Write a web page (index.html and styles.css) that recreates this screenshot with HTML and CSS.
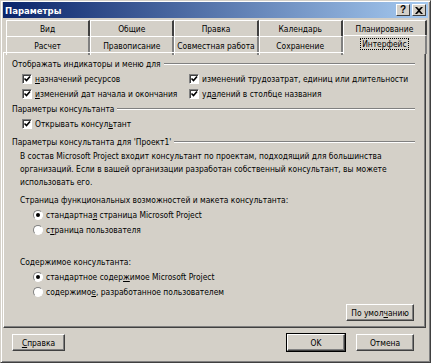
FILE: index.html
```html
<!DOCTYPE html>
<html lang="ru">
<head>
    <meta charset="UTF-8">
    <title>Параметры</title>
    <link rel="stylesheet" href="styles.css">
</head>
<body>
    <div class="dialog">
        <div class="titlebar">
            <span class="title">Параметры</span>
            <div class="caption-buttons">
                <span class="cbtn">?</span>
                <span class="cbtn">
                    <svg width="8" height="7" viewBox="0 0 8 7"><path d="M0 0h2l2 2 2-2h2L5 3.5 8 7H6L4 5 2 7H0l3-3.5z" fill="#000"/></svg>
                </span>
            </div>
        </div>

        <div class="tabs">
            <div class="tab-row back">
                <div class="tab">Вид</div>
                <div class="tab">Общие</div>
                <div class="tab">Правка</div>
                <div class="tab">Календарь</div>
                <div class="tab">Планирование</div>
            </div>
            <div class="tab-row front">
                <div class="tab">Расчет</div>
                <div class="tab">Правописание</div>
                <div class="tab">Совместная работа</div>
                <div class="tab">Сохранение</div>
                <div class="tab active"><span class="focus">Интерфейс</span></div>
            </div>
        </div>

        <div class="panel">
            <div class="group-title"><span>Отображать индикаторы и меню для</span><i class="rule"></i></div>
            <div class="check-grid">
                <label class="check"><span class="box checked"></span><span><u>н</u>азначений ресурсов</span></label>
                <label class="check"><span class="box checked"></span><span>изменений трудозатрат, единиц или длительности</span></label>
                <label class="check"><span class="box checked"></span><span><u>и</u>зменений дат начала и окончания</span></label>
                <label class="check"><span class="box checked"></span><span>уд<u>а</u>лений в столбце названия</span></label>
            </div>

            <div class="group-title"><span>Параметры консультанта</span><i class="rule"></i></div>
            <label class="check indent"><span class="box checked"></span><span>Открывать консул<u>ь</u>тант</span></label>

            <div class="group-title gap"><span>Параметры консультанта для 'Проект1'</span><i class="rule"></i></div>
            <p class="text">В состав Microsoft Project входит консультант по проектам, подходящий для большинства<br>организаций. Если в вашей организации разработан собственный консультант, вы можете<br>использовать его.</p>

            <div class="sub">Страница функциональных возможностей и макета консультанта:</div>
            <label class="radio"><span class="dot on"></span><span>стандартна<u>я</u> страница Microsoft Project</span></label>
            <label class="radio"><span class="dot"></span><span>с<u>т</u>раница пользователя</span></label>

            <div class="sub spaced">Содержимое консультанта:</div>
            <label class="radio"><span class="dot on"></span><span>стандартное содер<u>ж</u>имое Microsoft Project</span></label>
            <label class="radio"><span class="dot"></span><span>содержимо<u>е</u>, разработанное пользователем</span></label>

            <div class="panel-actions">
                <button class="btn reset">По умол<u>ч</u>анию</button>
            </div>
        </div>

        <div class="footer">
            <button class="btn help"><u>С</u>правка</button>
            <span class="spacer"></span>
            <button class="btn wide default">OK</button>
            <button class="btn wide">Отмена</button>
        </div>
    </div>
</body>
</html>
```

FILE: styles.css
```css
body {
    margin: 0;
    background-color: #d4d0c8;
    font-family: "DejaVu Sans Condensed", "Liberation Sans", sans-serif;
    font-size: 8.4px;
    color: #000;
}

.dialog {
    width: 431px;
    height: 363px;
    box-sizing: border-box;
    border: 1px solid;
    border-color: #d4d0c8 #404040 #404040 #d4d0c8;
    box-shadow: inset 1px 1px #fff, inset -1px -1px #808080;
    padding: 1px 2px 2px 2px;
    display: flex;
    flex-direction: column;
}

.titlebar {
    height: 16px;
    display: flex;
    align-items: center;
    padding: 0 2px 0 2px;
    background: linear-gradient(to right, #0a246a, #a6caf0);
}

.title {
    color: #fff;
    font-weight: bold;
    font-size: 9.5px;
    flex: 1;
}

.caption-buttons {
    display: flex;
    gap: 2px;
}

.cbtn {
    width: 14px;
    height: 12px;
    box-sizing: border-box;
    background-color: #d4d0c8;
    border: 1px solid;
    border-color: #fff #404040 #404040 #fff;
    display: flex;
    align-items: center;
    justify-content: center;
    font-family: "Liberation Sans", sans-serif;
    font-weight: bold;
    font-size: 10px;
    line-height: 1;
}

/* tabs */
.tabs {
    margin: 2px 0 0 3px;
    width: 421px;
}

.tab-row {
    display: grid;
    grid-template-columns: repeat(5, 1fr);
    height: 16px;
}

.tab {
    display: flex;
    align-items: center;
    justify-content: center;
    border-top: 1px solid #fff;
    border-left: 1px solid #fff;
    border-right: 2px solid #404040;
    box-sizing: border-box;
    white-space: nowrap;
    background-color: #d4d0c8;
}

.tab-row.front .tab {
    border-right-color: #808080;
}

.tab.active {
    position: relative;
    z-index: 1;
    top: -1px;
    height: 19px;
    padding-bottom: 2px;
    border-right-color: #404040;
}

.focus {
    outline: 1px dotted #000;
    padding: 0 1px;
}

/* page */
.panel {
    margin: 0 2px 0 0;
    height: 276px;
    box-sizing: border-box;
    border: 1px solid;
    border-color: #fff #404040 #404040 #fff;
    box-shadow: inset -1px -1px #808080;
    padding: 3px 10px 6px 8px;
    display: flex;
    flex-direction: column;
}

.group-title {
    display: flex;
    align-items: center;
    height: 15px;
    gap: 3px;
}

.group-title.gap {
    margin-top: 3px;
}

.rule {
    flex: 1;
    border-top: 1px solid #808080;
    border-bottom: 1px solid #fff;
}

.check-grid {
    display: grid;
    grid-template-columns: 167px 1fr;
    padding-left: 10px;
}

.check, .radio {
    display: flex;
    align-items: center;
    gap: 3px;
    height: 15px;
    white-space: nowrap;
}

.check.indent {
    padding-left: 10px;
}

.box {
    flex-shrink: 0;
    width: 10px;
    height: 10px;
    box-sizing: border-box;
    background-color: #fff;
    border: 1px solid;
    border-color: #808080 #fff #fff #808080;
    box-shadow: inset 1px 1px #404040;
}

.box.checked {
    background: #fff url("data:image/svg+xml,%3Csvg xmlns='http://www.w3.org/2000/svg' width='8' height='8'%3E%3Cpath d='M1.5 3.5l2 2 3.5-4' stroke='%23000' stroke-width='1.6' fill='none'/%3E%3C/svg%3E") no-repeat 0 0;
}

.text {
    margin: 1px 0 3px 8px;
    line-height: 13px;
    white-space: nowrap;
}

.sub {
    height: 15px;
    display: flex;
    align-items: center;
    margin-left: 8px;
}

.sub.spaced {
    margin-top: 17px;
}

.radio {
    padding-left: 21px;
}

.dot {
    flex-shrink: 0;
    width: 10px;
    height: 10px;
    box-sizing: border-box;
    border-radius: 50%;
    background-color: #fff;
    border: 1px solid;
    border-color: #808080 #fff #fff #808080;
    display: flex;
    align-items: center;
    justify-content: center;
}

.dot.on::after {
    content: "";
    width: 4px;
    height: 4px;
    border-radius: 50%;
    background-color: #000;
}

.panel-actions {
    margin-top: auto;
    display: flex;
    justify-content: flex-end;
    padding-right: 1px;
}

/* buttons */
.btn {
    font-family: inherit;
    font-size: inherit;
    color: #000;
    background-color: #d4d0c8;
    height: 17px;
    padding: 0;
    white-space: nowrap;
    border: 1px solid;
    border-color: #fff #404040 #404040 #fff;
    box-shadow: inset -1px -1px #808080;
    cursor: pointer;
}

.btn.reset {
    width: 68px;
}

.btn.help {
    width: 53px;
}

.btn.wide {
    width: 58px;
}

.btn.default {
    outline: 1px solid #000;
}

.footer {
    display: flex;
    align-items: center;
    gap: 11px;
    padding: 6px 14px 0 9px;
}

.spacer {
    flex: 1;
}
```
